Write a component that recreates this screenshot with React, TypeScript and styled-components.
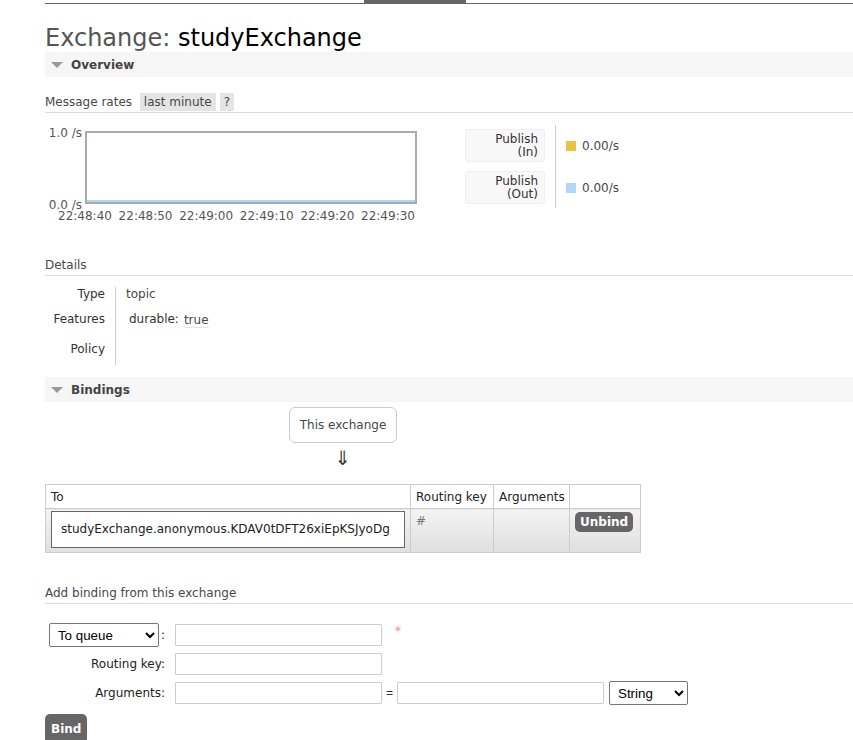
import React from 'react'
import styled, { createGlobalStyle } from 'styled-components'

const GlobalStyle = createGlobalStyle`
  body {
    margin: 0;
    background: #fff;
    font: 12px "DejaVu Sans", Verdana, sans-serif;
    color: #484848;
  }
`

const times = ['22:48:40', '22:48:50', '22:49:00', '22:49:10', '22:49:20', '22:49:30']

const App = () => {
  return (
    <Page>
      <GlobalStyle />
      <TopBar>
        <TopLine style={{ width: 319 }} />
        <TopTab />
        <TopLine style={{ flex: 1 }} />
      </TopBar>

      <Title>
        <span>Exchange: </span>
        <strong>studyExchange</strong>
      </Title>

      <SectionHeader>
        <Triangle />
        Overview
      </SectionHeader>

      <SubHead top={16}>
        Message rates <Pill>last minute</Pill>
        <Pill>?</Pill>
      </SubHead>

      <RatesRow>
        <Plot>
          <PlotTop>
            <YAxis>
              <span>1.0 /s</span>
              <span>0.0 /s</span>
            </YAxis>
            <PlotArea />
          </PlotTop>
          <XAxis>
            {times.map(t => (
              <span key={t}>{t}</span>
            ))}
          </XAxis>
        </Plot>

        <Legend>
          <LegendLabels>
            <LegendLabel>
              Publish
              <br />
              (In)
            </LegendLabel>
            <LegendLabel>
              Publish
              <br />
              (Out)
            </LegendLabel>
          </LegendLabels>
          <LegendValues>
            <LegendValue>
              <Swatch color="#edc240" />
              0.00/s
            </LegendValue>
            <LegendValue>
              <Swatch color="#afd8f8" />
              0.00/s
            </LegendValue>
          </LegendValues>
        </Legend>
      </RatesRow>

      <SubHead top={33}>Details</SubHead>

      <DetailsGrid>
        <DetailLabel>Type</DetailLabel>
        <DetailValue>topic</DetailValue>
        <DetailLabel>Features</DetailLabel>
        <DetailValue>
          <FeatureKey>durable:</FeatureKey>
          <FeatureVal>true</FeatureVal>
        </DetailValue>
        <DetailLabel>Policy</DetailLabel>
        <DetailValue />
      </DetailsGrid>

      <SectionHeader top={12}>
        <Triangle />
        Bindings
      </SectionHeader>

      <BindingsWrap>
        <SourceBox>This exchange</SourceBox>
        <Arrow>⇓</Arrow>
        <BindingTable>
          <colgroup>
            <col style={{ width: 365 }} />
            <col style={{ width: 83 }} />
            <col style={{ width: 76 }} />
            <col style={{ width: 71 }} />
          </colgroup>
          <thead>
            <tr>
              <th>To</th>
              <th>Routing key</th>
              <th>Arguments</th>
              <th></th>
            </tr>
          </thead>
          <tbody>
            <tr>
              <td>
                <QueueBox>studyExchange.anonymous.KDAV0tDFT26xiEpKSJyoDg</QueueBox>
              </td>
              <KeyCell>#</KeyCell>
              <td></td>
              <td>
                <DarkButton>Unbind</DarkButton>
              </td>
            </tr>
          </tbody>
        </BindingTable>
      </BindingsWrap>

      <SubHead top={31}>Add binding from this exchange</SubHead>

      <Form>
        <FormLabel>
          <Select defaultValue="queue" w={110}>
            <option value="queue">To queue</option>
            <option value="exchange">To exchange</option>
          </Select>
          :
        </FormLabel>
        <FormField>
          <Input />
          <Required>*</Required>
        </FormField>

        <FormLabel>Routing key:</FormLabel>
        <FormField>
          <Input />
        </FormField>

        <FormLabel>Arguments:</FormLabel>
        <FormField>
          <Input />
          <Equals>=</Equals>
          <Input />
          <Select defaultValue="string" w={79} gap={5}>
            <option value="string">String</option>
            <option value="number">Number</option>
            <option value="boolean">Boolean</option>
            <option value="list">List</option>
          </Select>
        </FormField>
      </Form>

      <BindButton>Bind</BindButton>
    </Page>
  )
}

export const Page = styled.div`
  padding-left: 45px;
  min-height: 740px;
  box-sizing: border-box;
  overflow: hidden;
`
export const TopBar = styled.div`
  display: flex;
  height: 4px;
`
export const TopLine = styled.div`
  height: 1px;
  margin-top: 3px;
  background: #666;
`
export const TopTab = styled.div`
  width: 102px;
  height: 4px;
  background: #666;
`
export const Title = styled.h1`
  margin: 20px 0 0;
  font-size: 24px;
  line-height: 28px;
  font-weight: normal;
  color: #555;
  strong {
    font-weight: normal;
    color: #000;
  }
`
export const SectionHeader = styled.div<{ top?: number }>`
  display: flex;
  align-items: center;
  height: 25px;
  margin-top: ${p => p.top ?? 0}px;
  padding-left: 6px;
  background: #f6f6f6;
  font-weight: bold;
  font-size: 12px;
  color: #444;
`
export const Triangle = styled.span`
  width: 0;
  height: 0;
  margin-right: 8px;
  border-left: 6px solid transparent;
  border-right: 6px solid transparent;
  border-top: 6px solid #999;
`
export const SubHead = styled.div<{ top: number }>`
  margin-top: ${p => p.top}px;
  line-height: 18px;
  padding-bottom: 1px;
  border-bottom: 1px solid #ddd;
  color: #484848;
`
export const Pill = styled.span`
  display: inline-block;
  margin-left: 4px;
  padding: 0 4px;
  background: #e4e4e4;
  color: #484848;
`
export const RatesRow = styled.div`
  display: flex;
  margin-top: 12px;
`
export const Plot = styled.div`
  display: flex;
  flex-direction: column;
`
export const PlotTop = styled.div`
  display: flex;
`
export const YAxis = styled.div`
  width: 40px;
  height: 86px;
  margin-top: 1px;
  padding-right: 3px;
  box-sizing: border-box;
  display: flex;
  flex-direction: column;
  justify-content: space-between;
  text-align: right;
  line-height: 14px;
  color: #555;
`
export const PlotArea = styled.div`
  width: 332px;
  height: 73px;
  margin-top: 6px;
  box-sizing: border-box;
  border: 2px solid #aaa;
  box-shadow: inset 0 -2px 0 #afd8f8;
  background: #fff;
`
export const XAxis = styled.div`
  display: flex;
  justify-content: space-between;
  width: 357px;
  margin: -3px 0 0 13px;
  line-height: 14px;
  color: #555;
`
export const Legend = styled.div`
  display: flex;
  margin-left: 48px;
  height: 83px;
`
export const LegendLabels = styled.div`
  display: flex;
  flex-direction: column;
  gap: 9px;
  padding: 4px 10px 0 0;
  border-right: 1px solid #ccc;
`
export const LegendLabel = styled.div`
  width: 80px;
  height: 33px;
  box-sizing: border-box;
  padding: 3px 6px 0 0;
  text-align: right;
  line-height: 13px;
  color: #333;
  background: #f8f8f8;
  border: 1px solid #eee;
  border-radius: 3px;
`
export const LegendValues = styled.div`
  display: flex;
  flex-direction: column;
  gap: 9px;
  padding: 4px 0 0 10px;
`
export const LegendValue = styled.div`
  display: flex;
  align-items: center;
  height: 33px;
  color: #484848;
`
export const Swatch = styled.span<{ color: string }>`
  width: 10px;
  height: 10px;
  margin-right: 6px;
  background: ${p => p.color};
`
export const DetailsGrid = styled.div`
  display: grid;
  grid-template-columns: 71px 1fr;
  grid-template-rows: 20px 29px 32px;
  margin-top: 8px;
`
export const DetailLabel = styled.div`
  display: flex;
  align-items: center;
  justify-content: flex-end;
  padding-right: 10px;
  border-right: 1px solid #ccc;
  color: #333;
  &:first-child {
    border-image: linear-gradient(transparent 4px, #ccc 4px) 1;
  }
`
export const DetailValue = styled.div`
  display: flex;
  align-items: center;
  padding-left: 10px;
  color: #484848;
`
export const FeatureKey = styled.span`
  margin-left: 3px;
  color: #333;
`
export const FeatureVal = styled.span`
  margin: 4px 0 0 4px;
  padding: 0 1px;
  border-bottom: 1px dotted #ccc;
  border-radius: 4px;
`
export const BindingsWrap = styled.div`
  display: inline-flex;
  flex-direction: column;
  align-items: center;
`
export const SourceBox = styled.div`
  margin-top: 5px;
  width: 108px;
  height: 36px;
  box-sizing: border-box;
  border: 1px solid #ccc;
  border-radius: 6px;
  line-height: 34px;
  text-align: center;
  color: #484848;
`
export const Arrow = styled.div`
  margin-top: 4px;
  font-size: 20px;
  line-height: 22px;
  color: #333;
`
export const BindingTable = styled.table`
  margin-top: 15px;
  width: 595px;
  table-layout: fixed;
  border-collapse: collapse;
  border: 1px solid #ccc;
  th {
    height: 23px;
    padding: 0 5px;
    text-align: left;
    font-weight: normal;
    color: #222;
    border: 1px solid #ccc;
    background: #fff;
  }
  td {
    height: 34px;
    padding: 2px 5px 4px;
    vertical-align: top;
    border: 1px solid #ccc;
    background: linear-gradient(#f3f3f3, #e0e0e0);
  }
`
export const QueueBox = styled.div`
  height: 37px;
  box-sizing: border-box;
  border: 1px solid #666;
  background: #fff;
  padding: 0 9px;
  line-height: 35px;
  color: #222;
  white-space: nowrap;
`
export const KeyCell = styled.td`
  && {
    padding-top: 5px;
    color: #777;
  }
`
export const DarkButton = styled.button`
  display: inline-block;
  margin-top: 1px;
  height: 20px;
  padding: 0 5px;
  border: 0;
  border-radius: 5px;
  background: #666;
  color: #fff;
  font: bold 12px "DejaVu Sans", Verdana, sans-serif;
  line-height: 20px;
`
export const Form = styled.div`
  display: grid;
  grid-template-columns: 125px 1fr;
  grid-template-rows: 28px 30px 28px;
  margin-top: 17px;
`
export const FormLabel = styled.div`
  display: flex;
  align-items: center;
  justify-content: flex-end;
  padding-right: 5px;
  color: #222;
`
export const FormField = styled.div`
  display: flex;
  align-items: center;
  padding-left: 5px;
`
export const Input = styled.input`
  width: 207px;
  height: 22px;
  box-sizing: border-box;
  border: 1px solid #ccc;
  border-radius: 1px;
  padding: 0 4px;
  background: #fff;
`
export const Select = styled.select<{ w: number; gap?: number }>`
  width: ${p => p.w}px;
  height: 24px;
  margin-left: ${p => p.gap ?? 0}px;
  margin-right: 2px;
  border: 1px solid #767676;
  border-radius: 2px;
  background: #fff;
  color: #000;
  font: 13.33px "Liberation Sans", Arial, sans-serif;
  padding: 0 2px 0 4px;
`
export const Required = styled.span`
  margin: -8px 0 0 13px;
  color: #f88;
`
export const Equals = styled.span`
  margin: 0 4px;
  font-family: "Liberation Sans", Arial, sans-serif;
  color: #333;
`
export const BindButton = styled.button`
  display: block;
  margin-top: 7px;
  height: 30px;
  padding: 0 6px;
  border: 0;
  border-radius: 5px;
  background: #666;
  color: #fff;
  font: bold 12px "DejaVu Sans", Verdana, sans-serif;
`

export default App
